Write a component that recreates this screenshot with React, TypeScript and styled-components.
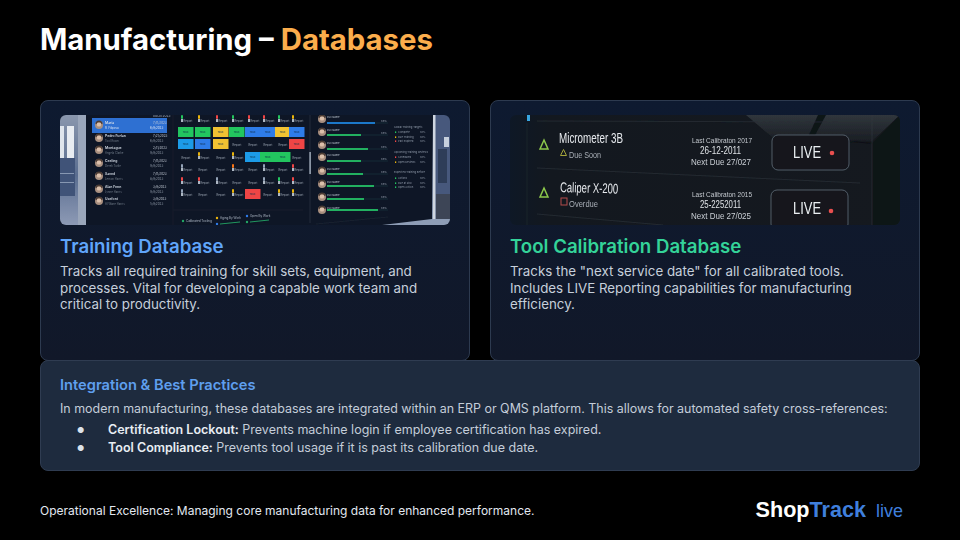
import React from 'react';
import styled, { createGlobalStyle } from 'styled-components';

const GlobalStyle = createGlobalStyle`
  html, body {
    margin: 0;
    padding: 0;
    background: #000;
  }
  * {
    box-sizing: border-box;
  }
`;

const Slide = styled.div`
  width: 960px;
  height: 540px;
  padding: 20px 40px 0;
  background: #000;
  color: #fff;
  font-family: Inter, "Liberation Sans", sans-serif;
  overflow: hidden;
  display: flex;
  flex-direction: column;
`;

const Title = styled.h1`
  flex: none;
  margin: 0;
  height: 80px;
  font-size: 29.33px;
  line-height: 40px;
  font-weight: 700;
`;

const Accent = styled.span`
  color: #fbad4c;
`;

const Cards = styled.div`
  flex: none;
  display: grid;
  grid-template-columns: 430px 430px;
  gap: 20px;
  height: 261px;
  margin-bottom: -1px;
`;

const Card = styled.section`
  padding: 14px 19px;
  border: 1px solid #2d3a4f;
  border-radius: 8px;
  background: linear-gradient(180deg, #0e1a30 0%, #111829 100%);
`;

const Shot = styled.svg`
  display: block;
  width: 390px;
  height: 110px;
  border-radius: 6px;
`;

const CardTitle = styled.h2<{ $color: string }>`
  margin: 10px 0 4px;
  font-size: 18.67px;
  line-height: 24px;
  font-weight: 600;
  color: ${(p) => p.$color};
`;

const CardText = styled.p`
  margin: 0;
  padding-right: 10px;
  font-size: 13.33px;
  line-height: 16.67px;
  color: #c6cfdb;
`;

const Panel = styled.section`
  flex: none;
  height: 111px;
  padding: 14px 19px;
  border: 1px solid #2f3c51;
  border-radius: 8px;
  background: #1e2b3e;
`;

const PanelTitle = styled.h3`
  margin: 0 0 5px;
  font-size: 14.67px;
  line-height: 20px;
  font-weight: 600;
  color: #5f9fee;
`;

const PanelText = styled.p`
  margin: 0 0 3px;
  font-size: 12.45px;
  line-height: 18px;
  color: #c4cdd9;
`;

const BulletList = styled.ul`
  margin: 0;
  padding: 0;
  list-style: none;
`;

const BulletRow = styled.li`
  display: flex;
  font-size: 12.5px;
  line-height: 18px;
  color: #c4cdd9;

  &::before {
    content: '●';
    flex: none;
    width: 31px;
    padding-left: 17px;
    font-size: 8px;
    color: #dbe2ea;
    box-sizing: content-box;
  }

  strong {
    font-weight: 600;
    color: #e8edf3;
  }
`;

const Footer = styled.footer`
  flex: none;
  display: flex;
  align-items: center;
  justify-content: space-between;
  height: 70px;
  padding: 8px 17px 0 0;
`;

const FooterText = styled.span`
  font-size: 12px;
  color: #e2e8f0;
`;

const Logo = styled.div`
  display: flex;
  align-items: baseline;
  gap: 10px;
  font-family: "Liberation Sans", Arial, sans-serif;
`;

const LogoMark = styled.span`
  font-size: 21.6px;
  font-weight: 700;
  color: #fff;
`;

const LogoTrack = styled.span`
  color: #3f7fdc;
`;

const LogoLive = styled.span`
  font-size: 18px;
  color: #3f7fdc;
`;

const people = [
  { y: 9, name: 'Maria', sub: 'R. Filipova', date: '7/11/2023', b: '6/9/2023' },
  { y: 22, name: 'Pedro Furlan', sub: 'Tool Room', date: '7/21/2023', b: '6/9/2023' },
  { y: 34, name: 'Montague', sub: 'Angela Clarke', date: '2/11/2023', b: '9/9/2023' },
  { y: 47, name: 'Ceeling', sub: 'Derek Tuttle', date: '7/11/2023', b: '9/9/2023' },
  { y: 60, name: 'Saved', sub: 'Lemon Harris', date: '7/11/2023', b: '8/9/2023' },
  { y: 73, name: 'Alan Fenn', sub: 'Lynne Harris', date: '3/9/2023', b: '9/9/2023' },
  { y: 85, name: 'Usefont', sub: 'Al Wane Harris', date: '3/9/2023', b: '5/9/2023' },
];

const colX = [126, 143, 161, 177, 193, 208, 223, 237];
const rowY = [5, 17, 29, 42, 54, 67, 79];
const GREEN = '#22c55e';
const BLUE = '#2f7be8';
const SKY = '#1e9be8';
const YELLOW = '#f1c232';
const RED = '#ef4444';

// c = filled cell, p = pinned label, t = plain label
const grid: string[][] = [
  ['p#22c55e', 'p#eab308', 'p#ef4444', 'p#22c55e', 'p#ef4444', 'p#ef4444', 'p#22c55e', 'p#eab308'],
  [`c${GREEN}`, `c${GREEN}`, `c${YELLOW}`, `c${GREEN}`, `c${BLUE}`, `c${BLUE}`, `c${YELLOW}`, `c${BLUE}`],
  [`c${SKY}`, `c${BLUE}`, `c${YELLOW}`, 't', 't', 't', 't', `c${RED}`],
  ['t', 'p#eab308', 't', 'p#eab308', `c${SKY}`, `c${GREEN}`, `c${GREEN}`, 't'],
  ['p#94a3b8', 't', 't', 'p#f97316', 't', 'p#94a3b8', 't', 'p#ef4444'],
  ['p#ef4444', 'p#ef4444', 'p#94a3b8', 't', 't', 'p#94a3b8', 'p#22c55e', 'p#ef4444'],
  ['p#94a3b8', 't', 't', 'p#eab308', `c${RED}`, 't', 'p#eab308', 'p#eab308'],
];

const bars = [
  { y: 8, ay: 4, end: 315, color: '#1d78c9' },
  { y: 20, ay: 17, end: 301, color: '#22b060' },
  { y: 34, ay: 30, end: 308, color: '#22b060' },
  { y: 46, ay: 42, end: 301, color: '#22b060' },
  { y: 59, ay: 56, end: 303, color: '#22b060' },
  { y: 71, ay: 69, end: 314, color: '#22b060' },
  { y: 84, ay: 82, end: 304, color: '#22b060' },
  { y: 95, ay: 95, end: 318, color: '#22b060' },
];

const sideRows = [
  { y: 13, head: true, label: 'Global Training Targets' },
  { y: 18, color: '#22c55e', label: 'Complete' },
  { y: 23, color: '#eab308', label: 'Due Training' },
  { y: 27, color: '#ef4444', label: 'Past Expired' },
  { y: 38, head: true, label: 'Upcoming Training Reviews' },
  { y: 43, color: '#ef4444', label: 'Scheduled' },
  { y: 48, color: '#eab308', label: 'Open Reviews' },
  { y: 58, head: true, label: 'Expected Training Before' },
  { y: 64, color: '#22c55e', label: 'Actions' },
  { y: 69, color: '#22c55e', label: 'Due at Risk' },
  { y: 73, color: '#22c55e', label: 'Open Action' },
];

const Avatar: React.FC<{ x: number; y: number }> = ({ x, y }) => (
  <g>
    <circle cx={x} cy={y} r={4} fill="#a88f7f" />
    <circle cx={x} cy={y - 0.6} r={2.2} fill="#dcc0ab" />
    <path d={`M${x - 3.5} ${y - 1}a3.5 3.6 0 0 1 7 0l-1 .2a2.5 2 0 0 0-5 0z`} fill="#4b3a33" />
  </g>
);

const TrainingShot: React.FC = () => (
  <Shot viewBox="0 0 390 110" fontFamily="Inter, sans-serif">
    <defs>
      <filter id="soft" x="-5%" y="-5%" width="110%" height="110%">
        <feGaussianBlur stdDeviation="0.55" />
      </filter>
      <linearGradient id="photo" x1="0" y1="0" x2="0" y2="1">
        <stop offset="0" stopColor="#8a97ad" />
        <stop offset="0.55" stopColor="#5a6d90" />
        <stop offset="1" stopColor="#8d9ab5" />
      </linearGradient>
    </defs>
    <rect width="390" height="110" fill="#0e1626" />
    <g filter="url(#soft)">
      {/* window photo, left */}
      <rect width="26" height="110" fill="url(#photo)" />
      <rect x="0" y="11" width="4" height="32" fill="#dfe5ec" />
      <rect x="7" y="11" width="7" height="32" fill="#e8ecf1" />
      <rect x="18" y="0" width="8" height="110" fill="#9aa6ba" />
      <rect x="0" y="43" width="15" height="38" fill="#3f5378" />
      <rect x="0" y="58" width="14" height="1" fill="#8797b2" />
      <rect x="0" y="67" width="14" height="1" fill="#8797b2" />

      {/* people list */}
      <text x="93" y="2" fontSize="3.2" fill="#aeb8c6">08/21/2023</text>
      <rect x="32" y="3" width="75" height="15" fill="#2d6fd2" />
      {people.map((p) => (
        <g key={p.y}>
          <Avatar x={39} y={p.y + 1} />
          <text x="45" y={p.y} fontSize="3.4" fontWeight="600" fill="#d5dce6">{p.name}</text>
          <text x="45" y={p.y + 4.5} fontSize="2.8" fill={p.y === 9 ? '#dce6f5' : '#6f7a87'}>{p.sub}</text>
          <text x="93" y={p.y} fontSize="3" fill="#c2cad5">{p.date}</text>
          <text x="90" y={p.y + 4.5} fontSize="3" fill={p.y === 9 ? '#dce6f5' : '#8d97a5'}>{p.b}</text>
        </g>
      ))}
      <line x1="113" y1="0" x2="113" y2="110" stroke="#18212f" strokeWidth="0.6" />

      {/* status grid */}
      {grid.map((row, r) =>
        row.map((cell, c) => {
          const x = colX[c];
          const y = rowY[r];
          const kind = cell[0];
          const color = cell.slice(1);
          if (kind === 'c') {
            return (
              <g key={`${r}-${c}`}>
                <rect x={x - 8} y={y - 5} width={15.5} height={10} fill={color} />
                <text x={x - 0.5} y={y + 1} fontSize="2.6" textAnchor="middle" fill="#10324a">Task</text>
              </g>
            );
          }
          return (
            <g key={`${r}-${c}`}>
              {kind === 'p' && (
                <>
                  <rect x={x - 5} y={y - 5} width={2} height={4} rx={1} fill={color} />
                  <rect x={x - 5} y={y - 1} width={2} height={3} fill="#aeb8c4" />
                </>
              )}
              <text x={x + (kind === 'p' ? 2 : 0)} y={y + 2} fontSize="2.8" textAnchor="middle" fill="#9aa4b1">Report</text>
            </g>
          );
        }),
      )}

      {/* legends under the grid */}
      <circle cx="123" cy="106" r="1.2" fill="#22a565" />
      <text x="126" y="107" fontSize="3" fill="#aeb8c6">Calibrated Tooling</text>
      <circle cx="157" cy="103" r="1.2" fill="#eab308" />
      <text x="160" y="104" fontSize="3" fill="#aeb8c6">Aging By Work</text>
      <circle cx="157" cy="109" r="1.2" fill="#2f7be8" />
      <line x1="160" y1="109" x2="180" y2="107" stroke="#22a565" strokeWidth="0.9" />
      <circle cx="187" cy="101" r="1.2" fill="#2f7be8" />
      <text x="190" y="102" fontSize="3" fill="#aeb8c6">Open By Work</text>
      <circle cx="187" cy="107" r="1.2" fill="#22a565" />
      <line x1="190" y1="107" x2="209" y2="105" stroke="#22a565" strokeWidth="0.9" />
      <line x1="113" y1="95" x2="243" y2="95" stroke="#18212f" strokeWidth="0.5" />

      {/* divider and progress bars */}
      <line x1="250" y1="0" x2="250" y2="108" stroke="#2b3545" strokeWidth="0.7" />
      <rect x="249.4" y="37" width="1.4" height="22" fill="#aab4c2" />
      {bars.map((b) => (
        <g key={b.y}>
          <Avatar x={262} y={b.ay} />
          <text x="267" y={b.ay - 1} fontSize="2.7" fill="#b6bfcb">Full Name</text>
          <text x="321" y={b.y - 1} fontSize="2.7" fill="#9aa4b2">88%</text>
          <rect x="267" y={b.y - 0.6} width="61" height="1.2" fill="#1a2330" />
          <rect x="267" y={b.y - 1} width={b.end - 267} height="2" fill={b.color} />
        </g>
      ))}
      <line x1="256" y1="109" x2="328" y2="102" stroke="#1f2936" strokeWidth="0.6" />

      {/* side summary */}
      {sideRows.map((s) => (
        <g key={s.y}>
          {!s.head && <rect x="335" y={s.y - 1.6} width="1.2" height="1.6" fill={s.color} />}
          <text x={s.head ? 334 : 338} y={s.y} fontSize="2.6" fill="#8f99a8">{s.label}</text>
          {!s.head && <text x="360" y={s.y} fontSize="2.5" fill="#8f99a8">88%</text>}
        </g>
      ))}

      {/* photo, right */}
      <path d="M373 0H390V110H322L372 104z" fill="#8e9db6" />
      <rect x="375" y="0" width="15" height="104" fill="#46587c" />
      <rect x="373" y="0" width="2.5" height="104" fill="#cfd6e0" />
      <rect x="384" y="22" width="5" height="10" fill="#c7d0dd" />
      <rect x="378" y="34" width="9" height="34" fill="#2e3c59" />
      <rect x="376" y="79" width="14" height="25" fill="#3c4456" />
    </g>
  </Shot>
);

const CalibrationShot: React.FC = () => (
  <Shot viewBox="0 0 390 110" fontFamily="'Liberation Sans', sans-serif">
    <defs>
      <filter id="soft2" x="-5%" y="-5%" width="110%" height="110%">
        <feGaussianBlur stdDeviation="0.25" />
      </filter>
      <linearGradient id="ceil" x1="0" y1="0" x2="0" y2="1">
        <stop offset="0" stopColor="#30363c" />
        <stop offset="1" stopColor="#1a1e24" />
      </linearGradient>
      <linearGradient id="bg2" x1="0" y1="0" x2="1" y2="0">
        <stop offset="0" stopColor="#0e1826" />
        <stop offset="0.1" stopColor="#13181f" />
        <stop offset="1" stopColor="#15191f" />
      </linearGradient>
    </defs>
    <rect width="390" height="110" fill="url(#bg2)" />
    <g filter="url(#soft2)">
      {/* ceiling */}
      <polygon points="236,0 390,0 362,26 262,22" fill="url(#ceil)" />
      <polygon points="308,0 316,0 304,22 298,22" fill="#0f1319" />
      <polygon points="390,0 390,110 362,110 362,28" fill="#101317" />
      <line x1="262" y1="23" x2="362" y2="28" stroke="#0e1115" strokeWidth="1" />
      <line x1="362" y1="0" x2="362" y2="110" stroke="#343a42" strokeWidth="0.6" />

      {/* table lines */}
      <rect x="17" y="0" width="3" height="6" fill="#38a6e0" />
      <line x1="27" y1="6" x2="330" y2="7" stroke="#2a3038" strokeWidth="0.7" />
      <line x1="17" y1="8" x2="17" y2="110" stroke="#262c34" strokeWidth="0.6" />
      <line x1="27" y1="53" x2="350" y2="68" stroke="#2a3038" strokeWidth="0.7" />
      <line x1="27" y1="99" x2="153" y2="110" stroke="#2a3038" strokeWidth="0.7" />

      {/* first row */}
      <path d="M34 25l4 9h-8z" fill="none" stroke="#8cc84b" strokeWidth="1.5" />
      <text x="49" y="28" fontSize="14" textLength="64" lengthAdjust="spacingAndGlyphs" fill="#e6e9ed">Micrometer 3B</text>
      <path d="M53.500 34.500l3 6h-6z" fill="none" stroke="#a5a53a" strokeWidth="1" />
      <text x="59" y="43" fontSize="9.500" textLength="32" lengthAdjust="spacingAndGlyphs" fill="#a7adb5">Due Soon</text>
      <text x="182" y="28" fontSize="8" textLength="60" lengthAdjust="spacingAndGlyphs" fill="#c3c8ce">Last Calibraton 2017</text>
      <text x="190" y="39" fontSize="10" textLength="41" lengthAdjust="spacingAndGlyphs" fill="#dde1e5">26-12-2011</text>
      <text x="181" y="50" fontSize="9" textLength="60" lengthAdjust="spacingAndGlyphs" fill="#c9ced4">Next Due 27/027</text>

      {/* second row */}
      <path d="M34 73l4 9h-8z" fill="none" stroke="#8cc84b" strokeWidth="1.5" />
      <text x="50" y="77" fontSize="14" textLength="58" lengthAdjust="spacingAndGlyphs" fill="#e6e9ed" transform="rotate(1.500 50 77)">Caliper X-200</text>
      <rect x="51" y="83" width="6" height="7" fill="none" stroke="#b34a4a" strokeWidth="1" />
      <text x="59" y="92" fontSize="9.500" textLength="29" lengthAdjust="spacingAndGlyphs" fill="#a7adb5">Overdue</text>
      <text x="182" y="82" fontSize="8" textLength="60" lengthAdjust="spacingAndGlyphs" fill="#c3c8ce">Last Calibraton 2015</text>
      <text x="190" y="93" fontSize="10" textLength="41" lengthAdjust="spacingAndGlyphs" fill="#dde1e5">25-2252011</text>
      <text x="181" y="104" fontSize="9" textLength="60" lengthAdjust="spacingAndGlyphs" fill="#c9ced4">Next Due 27/025</text>

      {/* live buttons */}
      <rect x="262" y="20" width="77" height="35" rx="6" fill="#13171d" stroke="#5a6470" strokeWidth="0.9" />
      <text x="283" y="43" fontSize="16" textLength="28" lengthAdjust="spacingAndGlyphs" fill="#eceff2">LIVE</text>
      <circle cx="322" cy="38" r="2.300" fill="#e9504f" />
      <rect x="261" y="75" width="77" height="40" rx="6" fill="#13171d" stroke="#5a6470" strokeWidth="0.9" />
      <text x="283" y="99" fontSize="16" textLength="28" lengthAdjust="spacingAndGlyphs" fill="#eceff2">LIVE</text>
      <circle cx="321" cy="96" r="2.300" fill="#e9504f" />
    </g>
  </Shot>
);

const App: React.FC = () => {
  return (
    <Slide>
      <GlobalStyle />
      <Title>
        Manufacturing – <Accent>Databases</Accent>
      </Title>

      <Cards>
        <Card>
          <TrainingShot />
          <CardTitle $color="#60a5fa">Training Database</CardTitle>
          <CardText>
            Tracks all required training for skill sets, equipment, and processes. Vital for developing a capable work
            team and critical to productivity.
          </CardText>
        </Card>
        <Card>
          <CalibrationShot />
          <CardTitle $color="#34d399">Tool Calibration Database</CardTitle>
          <CardText>
            Tracks the "next service date" for all calibrated tools. Includes LIVE Reporting capabilities for
            manufacturing efficiency.
          </CardText>
        </Card>
      </Cards>

      <Panel>
        <PanelTitle>Integration &amp; Best Practices</PanelTitle>
        <PanelText>
          In modern manufacturing, these databases are integrated within an ERP or QMS platform. This allows for
          automated safety cross-references:
        </PanelText>
        <BulletList>
          <BulletRow>
            <span>
              <strong>Certification Lockout:</strong> Prevents machine login if employee certification has expired.
            </span>
          </BulletRow>
          <BulletRow>
            <span>
              <strong>Tool Compliance:</strong> Prevents tool usage if it is past its calibration due date.
            </span>
          </BulletRow>
        </BulletList>
      </Panel>

      <Footer>
        <FooterText>Operational Excellence: Managing core manufacturing data for enhanced performance.</FooterText>
        <Logo>
          <LogoMark>
            Shop<LogoTrack>Track</LogoTrack>
          </LogoMark>
          <LogoLive>live</LogoLive>
        </Logo>
      </Footer>
    </Slide>
  );
};

export default App;
